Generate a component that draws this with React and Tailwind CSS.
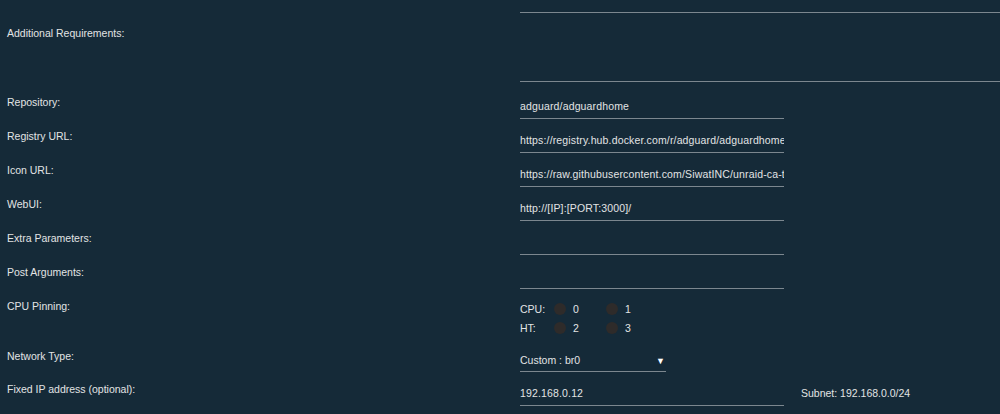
const fields = [
  { label: 'Repository:', value: 'adguard/adguardhome' },
  { label: 'Registry URL:', value: 'https://registry.hub.docker.com/r/adguard/adguardhome' },
  { label: 'Icon URL:', value: 'https://raw.githubusercontent.com/SiwatINC/unraid-ca-templates/master/icons/adguard.png' },
  { label: 'WebUI:', value: 'http://[IP]:[PORT:3000]/' },
  { label: 'Extra Parameters:', value: '' },
  { label: 'Post Arguments:', value: '' },
];

const Row = ({ label, children, className = '', labelPad = 'pt-[10px]' }) => (
  <div className={`flex ${className}`}>
    <div className={`w-[520px] shrink-0 pl-[7px] ${labelPad} leading-[14px]`}>{label}</div>
    <div className="flex-1 min-w-0">{children}</div>
  </div>
);

const TextInput = ({ value, width = 'w-[264px]' }) => (
  <div className={`${width} h-[34px] border-b border-[#7c878f] pt-[14px] leading-[14px] tracking-[0.15px] whitespace-nowrap overflow-hidden`}>
    {value}
  </div>
);

const Core = ({ num }) => (
  <div className="flex items-center w-[52px]">
    <span className="w-[12px] h-[12px] rounded-full bg-[#2e2b2a]" />
    <span className="ml-[7px]">{num}</span>
  </div>
);

export default function App() {
  return (
    <div
      className="w-[1000px] h-[414px] overflow-hidden bg-[#152a38] text-[#e2e4e5] text-[10.5px]"
      style={{ fontFamily: '"Liberation Sans", Arial, sans-serif' }}
    >
      <div className="flex">
        <div className="w-[520px] shrink-0" />
        <div className="flex-1 h-[13px] border-b border-[#7c878f]" />
      </div>

      <Row label="Additional Requirements:" className="h-[69px]" labelPad="pt-[13px]">
        <div className="h-[69px] border-b border-[#7c878f]" />
      </Row>

      <div className="h-[3px]" />

      {fields.map((f) => (
        <Row key={f.label} label={f.label}>
          <TextInput value={f.value} />
        </Row>
      ))}

      <Row label="CPU Pinning:" className="h-[50px]">
        <div className="pt-[14px] flex flex-col gap-[7px] leading-[12px]">
          <div className="flex items-center">
            <span className="w-[34px]">CPU:</span>
            <Core num="0" />
            <Core num="1" />
          </div>
          <div className="flex items-center">
            <span className="w-[34px]">HT:</span>
            <Core num="2" />
            <Core num="3" />
          </div>
        </div>
      </Row>

      <Row label="Network Type:">
        <div className="w-[146px] h-[33px] border-b border-[#7c878f] pt-[14px] leading-[14px] flex justify-between pr-[1px]">
          <span>Custom : br0</span>
          <span className="text-[9px] text-white pt-[1px]">▼</span>
        </div>
      </Row>

      <Row label="Fixed IP address (optional):">
        <div className="flex">
          <TextInput value="192.168.0.12" />
          <div className="pl-[17px] pt-[14px] leading-[14px]">Subnet: 192.168.0.0/24</div>
        </div>
      </Row>
    </div>
  );
}
